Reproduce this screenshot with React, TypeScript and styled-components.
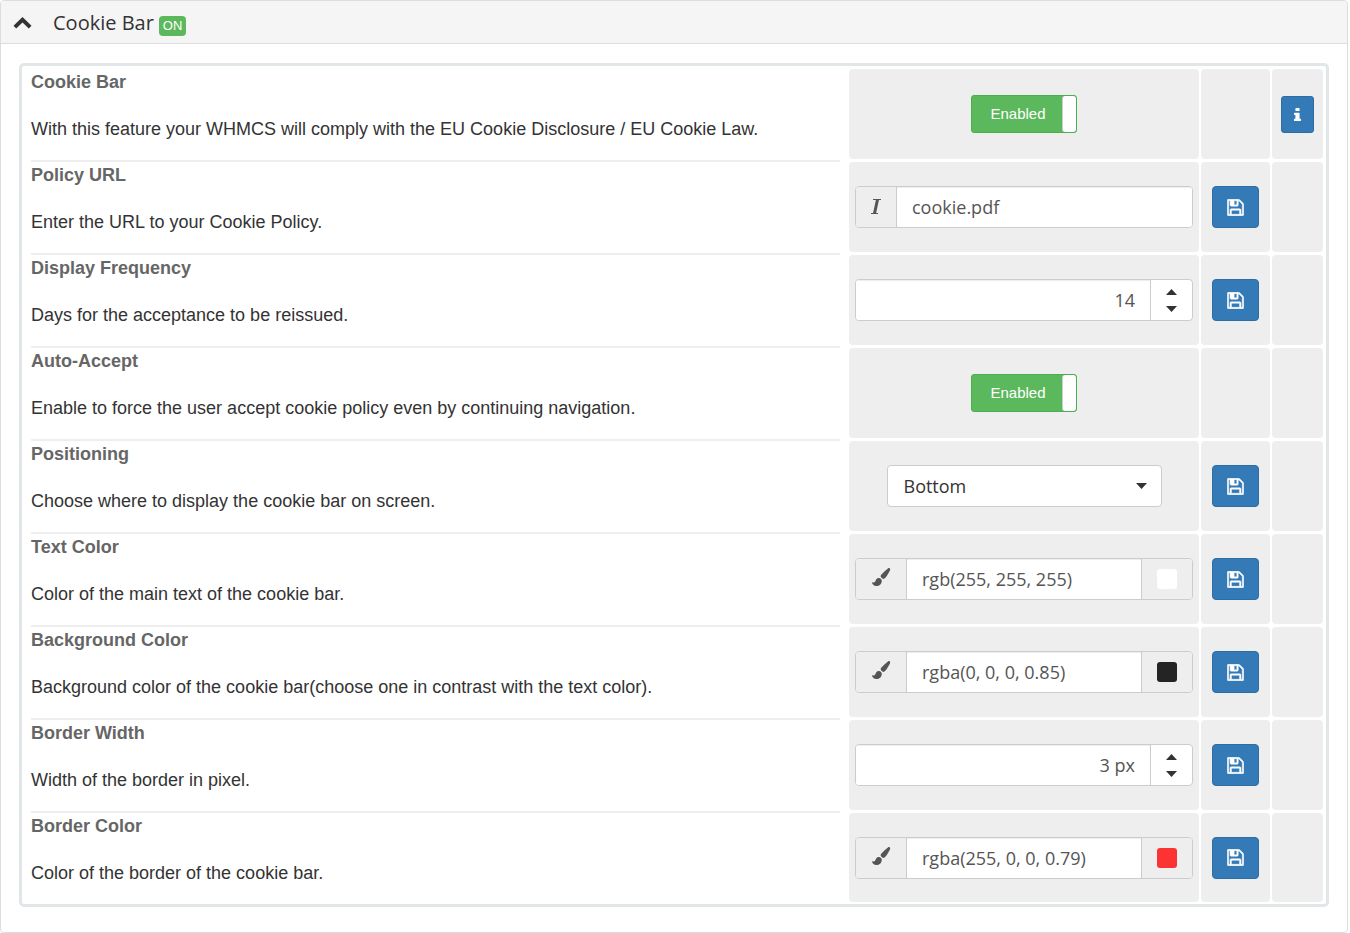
import React, { useId } from "react";
import styled, { createGlobalStyle } from "styled-components";

const openSans = '"Open Sans", sans-serif';
const arial = '"Liberation Sans", Arial, sans-serif';

const GlobalStyle = createGlobalStyle`
  *, *::before, *::after { box-sizing: border-box; }
  body { margin: 0; background: #fff; color: #333; font-family: ${arial}; }
  button, input, select { font: inherit; color: inherit; margin: 0; }
`;

const Panel = styled.section`
  margin-right: 2px;
  border: 1px solid #ddd;
  border-radius: 4px;
  overflow: hidden;
`;

const PanelHeading = styled.header`
  display: flex;
  align-items: center;
  height: 43px;
  padding: 2px 12px 0;
  background: #f5f5f5;
  border-bottom: 1px solid #ddd;
`;

const CollapseButton = styled.button`
  display: flex;
  margin-right: 20px;
  padding: 0;
  border: 0;
  background: none;
  cursor: pointer;
`;

const PanelTitle = styled.h1`
  margin: 0;
  font: 400 20px/28px ${openSans};
`;

const StatusBadge = styled.span`
  margin: 6px 0 0 5px;
  padding: 0 4px;
  border-radius: 4px;
  background: #5cb85c;
  color: #fff;
  font-size: 13px;
  line-height: 20px;
`;

const PanelBody = styled.div`
  padding: 19px 18px 25px;
`;

const Settings = styled.form`
  padding: 3px 3px 2px 9px;
  border: 3px solid #e1e6e9;
  border-radius: 5px;
`;

const Row = styled.div`
  display: grid;
  grid-template-columns: minmax(0, 1fr) 350px 69px 51px;
  column-gap: 2px;
  min-height: 90px;

  & + & { margin-top: 3px; }
  &:last-child { min-height: 89px; }
`;

const Description = styled.div<{ $divided: boolean }>`
  margin: -2px 7px 0 0;
  border-top: 2px solid ${(p) => (p.$divided ? "#eee" : "transparent")};
  font-size: 18px;
  line-height: 23px;
`;

const SettingName = styled.label`
  display: block;
  margin: 2px 0 24px;
  color: #666;
  font-weight: 700;
`;

const SettingHelp = styled.p`
  margin: 0;
`;

const Cell = styled.div`
  display: flex;
  align-items: center;
  justify-content: center;
  padding: 0 6px;
  border-radius: 4px;
  background: #eee;
`;

const ToggleTrack = styled.span`
  display: flex;
  position: relative;
  width: 106px;
  height: 38px;
  border: 1px solid #4cae4c;
  border-radius: 3px;
  background: #5cb85c;
  color: #fff;
  font-size: 15px;
`;

const ToggleInput = styled.input`
  position: absolute;
  inset: 0;
  width: 100%;
  height: 100%;
  opacity: 0;
  cursor: pointer;
`;

const ToggleText = styled.span`
  flex: 1;
  padding-left: 2px;
  line-height: 36px;
  text-align: center;
`;

const ToggleHandle = styled.span`
  width: 14px;
  border-left: 1px solid #ccc;
  border-radius: 3px;
  background: #fff;
`;

const InputGroup = styled.div`
  display: flex;
  width: 100%;
  height: 42px;
  border: 1px solid #ccc;
  border-radius: 4px;
  background: #fff;
  overflow: hidden;
`;

const Addon = styled.span<{ $width: number; $side: "left" | "right" }>`
  display: flex;
  flex: none;
  align-items: center;
  justify-content: center;
  width: ${(p) => p.$width}px;
  background: #eee;
  color: #555;
  border-${(p) => (p.$side === "left" ? "right" : "left")}: 1px solid #ccc;
`;

const TextInput = styled.input<{ $align?: "right" }>`
  flex: 1;
  min-width: 0;
  padding: 0 15px;
  border: 0;
  outline: 0;
  background: #fff;
  box-shadow: inset 0 1px 1px rgba(0, 0, 0, 0.075);
  color: #555;
  font: 400 18px/24px ${openSans};
  text-align: ${(p) => p.$align ?? "left"};
`;

const Swatch = styled.span<{ $color: string }>`
  width: 20px;
  height: 20px;
  border-radius: 3px;
  background: ${(p) => p.$color};
`;

const Stepper = styled.span`
  display: flex;
  flex: none;
  flex-direction: column;
  justify-content: center;
  width: 42px;
  border-left: 1px solid #ccc;
`;

const StepButton = styled.button`
  display: flex;
  align-items: center;
  justify-content: center;
  height: 17px;
  padding: 0;
  border: 0;
  background: none;
  cursor: pointer;
`;

const SelectWrap = styled.span`
  display: grid;
  align-items: center;
  width: 275px;
  height: 42px;

  & > * { grid-area: 1 / 1; }
  & > svg { justify-self: end; margin-right: 15px; pointer-events: none; }
`;

const Select = styled.select`
  width: 100%;
  height: 100%;
  padding: 0 16px;
  border: 1px solid #ccc;
  border-radius: 4px;
  background: #fff;
  appearance: none;
  color: #333;
  font: 400 18px/24px ${openSans};
`;

const PrimaryButton = styled.button<{ $small?: boolean }>`
  display: flex;
  flex: none;
  align-items: center;
  justify-content: center;
  width: ${(p) => (p.$small ? 33 : 47)}px;
  height: ${(p) => (p.$small ? 37 : 42)}px;
  padding: 0;
  border: 1px solid #2e6da4;
  border-radius: ${(p) => (p.$small ? 3 : 4)}px;
  background: #337ab7;
  color: #fff;
  cursor: pointer;
`;

const ChevronUpIcon = () => (
  <svg width="20" height="14" viewBox="0 0 20 14" aria-hidden="true">
    <path d="M9.500 1 18.500 9.700 15.800 12.500 9.500 6.600 3.200 12.500 0.500 9.700z" fill="#333" />
  </svg>
);

const SaveIcon = () => (
  <svg width="17" height="17" viewBox="-30 98 1596 1596" fill="currentColor" stroke="currentColor" strokeWidth="50" aria-hidden="true">
    <path d="M384 1536h768v-384h-768v384zM1280 1536h128v-896q0 -14 -10 -38.500t-20 -34.500l-281 -281q-10 -10 -34 -20t-39 -10v416q0 40 -28 68t-68 28h-576q-40 0 -68 -28t-28 -68v-416h-128v1280h128v-416q0 -40 28 -68t68 -28h832q40 0 68 28t28 68v416zM896 608v-320q0 -13 -9.500 -22.500t-22.500 -9.500h-192q-13 0 -22.500 9.500t-9.500 22.500v320q0 13 9.500 22.500t22.500 9.500h192q13 0 22.500 -9.500t9.500 -22.500zM1536 640v928q0 40 -28 68t-68 28h-1344q-40 0 -68 -28t-28 -68v-1344q0 -40 28 -68t68 -28h928q40 0 88 20t76 48l280 280q28 28 48 76t20 88z" />
  </svg>
);

const InfoIcon = () => (
  <svg width="7" height="13" viewBox="0 128 640 1408" preserveAspectRatio="none" fill="currentColor" aria-hidden="true">
    <path d="M640 1344v128q0 26-19 45t-45 19h-512q-26 0-45-19t-19-45v-128q0-26 19-45t45-19h64v-384h-64q-26 0-45-19t-19-45v-128q0-26 19-45t45-19h384q26 0 45 19t19 45v576h64q26 0 45 19t19 45zM512 192v192q0 26-19 45t-45 19h-256q-26 0-45-19t-19-45v-192q0-26 19-45t45-19h256q26 0 45 19t19 45z" />
  </svg>
);

const ItalicIcon = () => (
  <svg width="12" height="18" viewBox="0 0 12 18" fill="none" stroke="currentColor" aria-hidden="true">
    <path d="M3 1.500H11M1 15.500H8" strokeWidth="1" />
    <path d="M7.500 1.500 4.500 15.500" strokeWidth="3" />
  </svg>
);

const BrushIcon = () => (
  <svg width="20" height="24" viewBox="0 0 20 24" fill="currentColor" aria-hidden="true">
    <path d="M18.600 1.200c.8.600.7 1.400.3 2.300-1.300 2.800-3 5.500-4.800 7.600-.8.900-1.900 1-2.700.4l-1.200-1c-.8-.7-.7-1.800 0-2.700 2-2.300 4.300-4.500 6.700-6.400.6-.4 1.200-.6 1.700-.2z" />
    <path d="M8.300 11c1.500.3 2.500 1.500 2.500 2.900-.1 3.100-2.500 5-5.400 5-2.400 0-4-1.300-4.600-4 1.200.8 2.200.9 3 .2.600-.6.600-1.500 1.200-2.400.7-1.200 1.900-1.900 3.300-1.700z" />
  </svg>
);

const CaretIcon = ({ up = false }: { up?: boolean }) => (
  <svg width="11" height="6" viewBox="0 0 11 6" fill="#333" aria-hidden="true">
    <path d={up ? "M0 6 5.500 0 11 6z" : "M0 0h11L5.500 6z"} />
  </svg>
);

type Setting = {
  name: string;
  help: string;
  kind: "toggle" | "text" | "number" | "select" | "color";
  value: string;
  color?: string;
  info?: boolean;
};

const settings: Setting[] = [
  { name: "Cookie Bar", help: "With this feature your WHMCS will comply with the EU Cookie Disclosure / EU Cookie Law.", kind: "toggle", value: "Enabled", info: true },
  { name: "Policy URL", help: "Enter the URL to your Cookie Policy.", kind: "text", value: "cookie.pdf" },
  { name: "Display Frequency", help: "Days for the acceptance to be reissued.", kind: "number", value: "14" },
  { name: "Auto-Accept", help: "Enable to force the user accept cookie policy even by continuing navigation.", kind: "toggle", value: "Enabled" },
  { name: "Positioning", help: "Choose where to display the cookie bar on screen.", kind: "select", value: "Bottom" },
  { name: "Text Color", help: "Color of the main text of the cookie bar.", kind: "color", value: "rgb(255, 255, 255)", color: "#fff" },
  { name: "Background Color", help: "Background color of the cookie bar(choose one in contrast with the text color).", kind: "color", value: "rgba(0, 0, 0, 0.85)", color: "rgba(0, 0, 0, 0.85)" },
  { name: "Border Width", help: "Width of the border in pixel.", kind: "number", value: "3 px" },
  { name: "Border Color", help: "Color of the border of the cookie bar.", kind: "color", value: "rgba(255, 0, 0, 0.79)", color: "rgba(255, 0, 0, 0.79)" },
];

const Control = ({ id, setting }: { id: string; setting: Setting }) => {
  switch (setting.kind) {
    case "toggle":
      return (
        <ToggleTrack>
          <ToggleText>{setting.value}</ToggleText>
          <ToggleHandle />
          <ToggleInput id={id} type="checkbox" defaultChecked />
        </ToggleTrack>
      );
    case "text":
      return (
        <InputGroup>
          <Addon $width={41} $side="left"><ItalicIcon /></Addon>
          <TextInput id={id} type="text" defaultValue={setting.value} />
        </InputGroup>
      );
    case "number":
      return (
        <InputGroup>
          <TextInput id={id} type="text" inputMode="numeric" $align="right" defaultValue={setting.value} />
          <Stepper>
            <StepButton type="button" aria-label="Increase"><CaretIcon up /></StepButton>
            <StepButton type="button" aria-label="Decrease"><CaretIcon /></StepButton>
          </Stepper>
        </InputGroup>
      );
    case "select":
      return (
        <SelectWrap>
          <Select id={id} defaultValue={setting.value}>
            <option>Bottom</option>
            <option>Top</option>
          </Select>
          <CaretIcon />
        </SelectWrap>
      );
    case "color":
      return (
        <InputGroup>
          <Addon $width={51} $side="left"><BrushIcon /></Addon>
          <TextInput id={id} type="text" defaultValue={setting.value} />
          <Addon $width={51} $side="right"><Swatch $color={setting.color ?? "#fff"} /></Addon>
        </InputGroup>
      );
  }
};

const SettingRow = ({ setting, divided }: { setting: Setting; divided: boolean }) => {
  const id = useId();
  return (
    <Row>
      <Description $divided={divided}>
        <SettingName htmlFor={id}>{setting.name}</SettingName>
        <SettingHelp>{setting.help}</SettingHelp>
      </Description>
      <Cell><Control id={id} setting={setting} /></Cell>
      <Cell>
        {setting.kind !== "toggle" && (
          <PrimaryButton type="button" aria-label={`Save ${setting.name}`}><SaveIcon /></PrimaryButton>
        )}
      </Cell>
      <Cell>
        {setting.info && (
          <PrimaryButton type="button" $small aria-label={`About ${setting.name}`}><InfoIcon /></PrimaryButton>
        )}
      </Cell>
    </Row>
  );
};

export default function App() {
  return (
    <>
      <GlobalStyle />
      <Panel>
        <PanelHeading>
          <CollapseButton type="button" aria-label="Collapse"><ChevronUpIcon /></CollapseButton>
          <PanelTitle>Cookie Bar</PanelTitle>
          <StatusBadge>ON</StatusBadge>
        </PanelHeading>
        <PanelBody>
          <Settings>
            {settings.map((setting, index) => (
              <SettingRow key={setting.name} setting={setting} divided={index > 0} />
            ))}
          </Settings>
        </PanelBody>
      </Panel>
    </>
  );
}
